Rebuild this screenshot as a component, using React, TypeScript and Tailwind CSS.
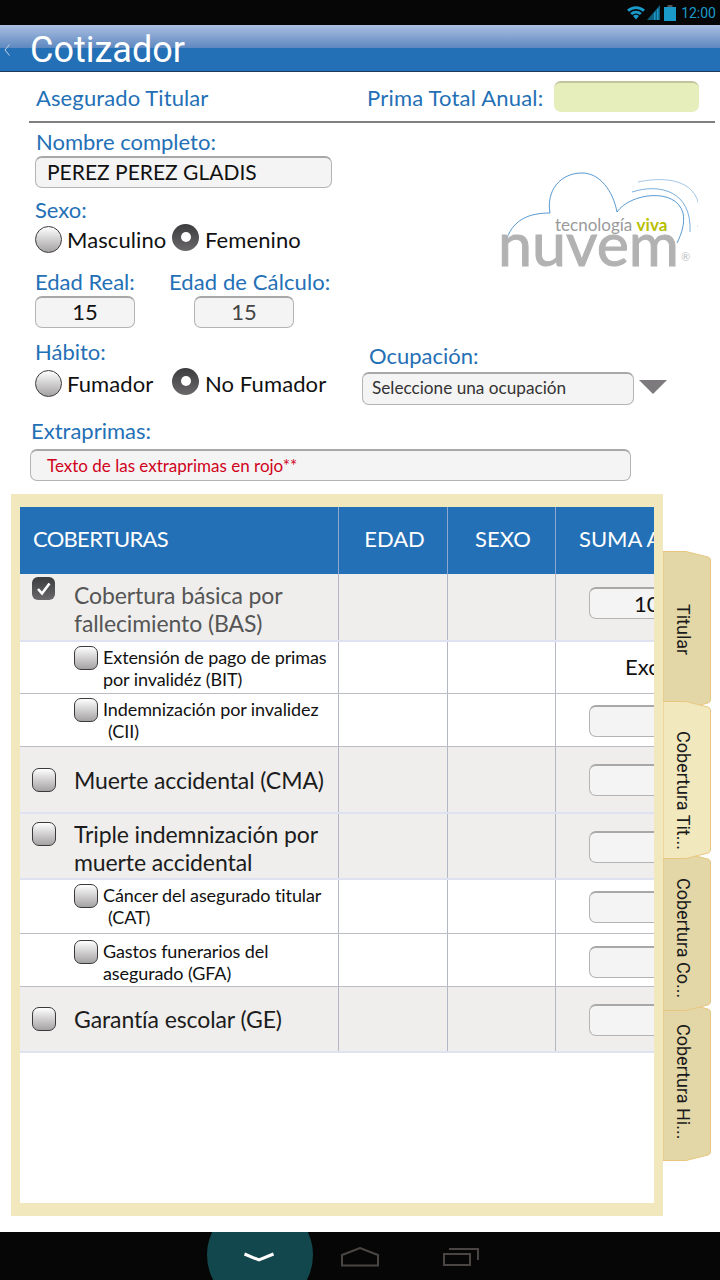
import React from "react";

const LABEL = "text-[22px] leading-[24px] text-[#2470b6] whitespace-nowrap";
const FIELD = "rounded-[7px] border border-[#b4b4b4] border-t-2 border-t-[#a8a8a8] bg-[#f4f4f4]";

const Radio = ({ checked }: { checked?: boolean }) =>
  checked ? (
    <span className="block w-[27px] h-[27px] rounded-full bg-gradient-to-b from-[#3c3c3e] to-[#6a686a] flex items-center justify-center shrink-0">
      <span className="block w-[10px] h-[10px] rounded-full bg-white"></span>
    </span>
  ) : (
    <span className="block w-[27px] h-[27px] rounded-full border border-[#3a3a3a] bg-gradient-to-b from-[#ffffff] to-[#a5a2a4] shrink-0"></span>
  );

const Check = ({ checked }: { checked?: boolean }) =>
  checked ? (
    <span className="block w-[23px] h-[23px] rounded-[6px] bg-gradient-to-b from-[#3c3c3e] to-[#6a686a] shrink-0">
      <svg viewBox="0 0 23 23" className="w-[23px] h-[23px]">
        <path d="M6 12 L10 16.5 L17.5 6.5" fill="none" stroke="#fff" strokeWidth="2.6" />
      </svg>
    </span>
  ) : (
    <span className="block w-[24px] h-[24px] rounded-[7px] border border-[#3a3a3a] bg-gradient-to-b from-[#ffffff] to-[#a5a2a4] shrink-0"></span>
  );

const Logo = () => (
  <svg viewBox="498 168 200 100" className="w-[200px] h-[100px]">
    <g fill="none" stroke="#2f7fc4" strokeWidth="0.8">
      <path d="M507 237 C514 218 530 212 550 212 C546 190 560 172 582 172 C600 172 613 190 617 211 C630 192 676 186 683 212 C685 222 682 232 677 242" />
      <path d="M632 191 C660 182 692 190 690 231" strokeOpacity="0.8" />
      <path d="M638 181 C670 174 708 180 698 226" strokeOpacity="0.55" />
    </g>
    <text x="555" y="230" fontSize="17" fill="#9a9a9a" fontFamily="Lato, sans-serif">
      tecnología <tspan fill="#b6c000" fontWeight="700">viva</tspan>
    </text>
    <text x="498" y="265" fontSize="60" fill="#b2b2b2" stroke="#b2b2b2" strokeWidth="1" fontFamily="Lato, sans-serif" textLength="181" lengthAdjust="spacingAndGlyphs">
      nuvem
    </text>
    <text x="681" y="260" fontSize="11" fill="#bdbdbd" fontFamily="Lato, sans-serif">®</text>
  </svg>
);

const Tab = ({ label, active, cls }: { label: string; active?: boolean; cls: string }) => (
  <div className={`relative w-[48px] h-[158px] flex items-center justify-center ${cls}`}>
    <svg viewBox="0 0 48 158" className="absolute inset-0 w-[48px] h-[158px]">
      <path
        d="M0 0.5 H23 L45 6 Q47.5 7 47.5 9 V149 Q47.5 151 45 152 L23 157.5 H0 Z"
        fill={active ? "#f2e8be" : "#e3d7a7"}
        stroke="#e8c67f"
      />
    </svg>
    <span className="relative [writing-mode:vertical-rl] font-['Roboto',sans-serif] text-[18px] leading-[20px] text-[#1a1a1a] whitespace-nowrap pr-[8px]">
      {label}
    </span>
  </div>
);

type Row = {
  h: string;
  text: string[];
  main?: boolean;
  checked?: boolean;
  muted?: boolean;
  indent?: boolean;
  inputTop?: string;
  value?: string;
  exc?: boolean;
  subTop?: string;
};

const ROWS: Row[] = [
  { h: "h-[68px]", text: ["Cobertura básica por", "fallecimiento (BAS)"], main: true, checked: true, muted: true, inputTop: "pt-[13px]", value: "100,000" },
  { h: "h-[52px]", text: ["Extensión de pago de primas", "por invalidéz (BIT)"], exc: true },
  { h: "h-[53px]", text: ["Indemnización por invalidez", "(CII)"], indent: true, inputTop: "pt-[11px]" },
  { h: "h-[67px]", text: ["Muerte accidental (CMA)"], main: true, inputTop: "pt-[17px]" },
  { h: "h-[66px]", text: ["Triple indemnización por", "muerte accidental"], main: true, inputTop: "pt-[17px]" },
  { h: "h-[54px]", text: ["Cáncer del asegurado titular", "(CAT)"], indent: true, inputTop: "pt-[11px]" },
  { h: "h-[53px]", text: ["Gastos funerarios del", "asegurado (GFA)"], inputTop: "pt-[12px]", subTop: "pt-[6px]" },
  { h: "h-[66px]", text: ["Garantía escolar (GE)"], main: true, inputTop: "pt-[17px]" },
];

const CobRow = ({ row }: { row: Row }) => {
  const rowCls = row.main
    ? "bg-[#efeeec] border-b-2 border-b-[#dfe2f0]"
    : "bg-white border-b border-b-[#bcbcc4]";
  return (
    <div className={`flex ${row.h} ${rowCls}`}>
      <div className="w-[319px] shrink-0 border-r border-[#b4b8c4] flex">
        {row.main ? (
          <div className={`flex w-full ${row.text.length === 1 ? "items-center" : ""}`}>
            <div className={row.text.length === 1 ? "pl-[12px]" : row.checked ? "pl-[12px] pt-[3px]" : "pl-[12px] pt-[8px]"}>
              <Check checked={row.checked} />
            </div>
            <div className={`${row.checked ? "pl-[19px]" : "pl-[18px]"} text-[23px] leading-[28px] tracking-[-0.1px] whitespace-nowrap ${row.muted ? "text-[#555555] pt-[7px]" : "text-[#1c1c1c]"} ${!row.muted && row.text.length > 1 ? "pt-[6px]" : ""}`}>
              {row.text.map((t) => (
                <div key={t}>{t}</div>
              ))}
            </div>
          </div>
        ) : (
          <div className={`flex pl-[54px] ${row.subTop ?? "pt-[4px]"}`}>
            <Check />
            <div className="pl-[5px] text-[18px] leading-[22px] tracking-[-0.1px] text-[#111] whitespace-nowrap">
              {row.text.map((t, i) => (
                <div key={t} className={row.indent && i === 1 ? "pl-[5px]" : ""}>
                  {t}
                </div>
              ))}
            </div>
          </div>
        )}
      </div>
      <div className="w-[109px] shrink-0 border-r border-[#b4b8c4]"></div>
      <div className="w-[108px] shrink-0 border-r border-[#b4b8c4]"></div>
      <div className={`w-[210px] shrink-0 pl-[33px] ${row.inputTop ?? ""}`}>
        {row.exc ? (
          <div className="pl-[36px] pt-[11px] text-[22px] leading-[28px] text-[#111]">Excluido</div>
        ) : (
          <div className={`h-[32px] w-[150px] ${FIELD} pl-[44px] text-[22px] leading-[29px] text-[#111]`}>{row.value ?? ""}</div>
        )}
      </div>
    </div>
  );
};

export default function App() {
  return (
    <div className="w-[720px] h-[1280px] overflow-hidden bg-white flex flex-col font-['Lato',sans-serif]">
      {/* status bar */}
      <div className="h-[25px] bg-[#060606] flex items-center justify-end pr-[4px] shrink-0">
        <svg viewBox="0 0 18 15" className="w-[18px] h-[15px]">
          <path d="M0 4.8 A13 13 0 0 1 18 4.8 L16 6.8 A10 10 0 0 0 2 6.8 Z M3.2 8 A8.5 8.5 0 0 1 14.8 8 L12.8 10 A5.5 5.5 0 0 0 5.2 10 Z M6 11 A4 4 0 0 1 12 11 L9 14.6 Z" fill="#1a9ac9" />
        </svg>
        <svg viewBox="0 0 13 15" className="w-[13px] h-[15px] ml-[2px]">
          <path d="M0 15 L13 0 V15 Z" fill="#0f5f7f" />
          <path d="M7 15 V8 L8.5 6 V15 Z M10 15 V4.5 L11.5 3 V15 Z" fill="#1a9ac9" />
        </svg>
        <svg viewBox="0 0 12 16" className="w-[12px] h-[16px] ml-[4px]">
          <path d="M3.5 0 H8.5 V2 H3.5 Z" fill="#555" />
          <path d="M0 2 H12 V16 H0 Z" fill="#1a9ac9" />
        </svg>
        <span className="font-['Roboto',sans-serif] text-[14px] leading-none text-[#1a9ac9] ml-[5px]">12:00</span>
      </div>

      {/* title bar */}
      <div className="h-[47px] shrink-0 bg-[linear-gradient(to_bottom,#abbfe2_0%,#5e88bf_50%,#2470b6_51%,#2470b6_100%)] border-b border-b-[#1d3b5c] flex items-center pt-[4px]">
        <svg viewBox="0 0 6 12" className="w-[6px] h-[12px] ml-[4px]">
          <path d="M5.5 0.5 L1 6 L5.5 11.5" fill="none" stroke="#c4d2ea" strokeWidth="1" />
        </svg>
        <span className="ml-[20px] font-['Roboto',sans-serif] text-[36px] leading-none text-white">Cotizador</span>
      </div>

      {/* top row */}
      <div className="h-[49px] shrink-0 flex items-center pl-[36px]">
        <span className={`${LABEL} w-[331px] pt-[3px] tracking-[0.1px]`}>Asegurado Titular</span>
        <span className={`${LABEL} w-[187px] pt-[3px] tracking-[0.2px]`}>Prima Total Anual:</span>
        <div className="w-[145px] h-[31px] rounded-[7px] bg-[#e6eebc] border-t-2 border-t-[#c4c49c]"></div>
      </div>
      <div className="h-[2px] ml-[29px] mr-[5px] bg-[#808080] shrink-0"></div>

      {/* datos */}
      <div className="flex shrink-0 pl-[35px]">
        <div className="w-[298px] flex flex-col">
          <div className={`${LABEL} pl-[1px] pt-[7px]`}>Nombre completo:</div>
          <div className={`${FIELD} mt-[2px] h-[32px] w-[297px] pl-[11px] text-[21px] leading-[28px] text-[#111]`}>PEREZ PEREZ GLADIS</div>
          <div className={`${LABEL} mt-[10px]`}>Sexo:</div>
          <div className="flex items-center mt-[2px] h-[30px] text-[22px] tracking-[0.1px] text-[#111] whitespace-nowrap">
            <Radio />
            <span className="pl-[5px] w-[110px]">Masculino</span>
            <div className="-mt-[4px]"><Radio checked /></div>
            <span className="pl-[6px]">Femenino</span>
          </div>
          <div className="flex mt-[16px]">
            <div className="w-[134px]">
              <div className={LABEL}>Edad Real:</div>
              <div className={`${FIELD} mt-[2px] h-[32px] w-[100px] text-center text-[22px] leading-[28px] text-[#111]`}>15</div>
            </div>
            <div>
              <div className={`${LABEL} tracking-[0.1px]`}>Edad de Cálculo:</div>
              <div className={`${FIELD} mt-[2px] ml-[25px] h-[32px] w-[100px] text-center text-[22px] leading-[28px] text-[#444]`}>15</div>
            </div>
          </div>
        </div>
        <div className="ml-[165px] mt-[46px]">
          <Logo />
        </div>
      </div>

      {/* habito / ocupacion */}
      <div className="flex shrink-0 pl-[35px] mt-[12px]">
        <div className="w-[327px]">
          <div className={LABEL}>Hábito:</div>
          <div className="flex items-center mt-[4px] h-[30px] text-[22px] tracking-[0.1px] text-[#111] whitespace-nowrap">
            <Radio />
            <span className="pl-[5px] w-[110px]">Fumador</span>
            <div className="-mt-[4px]"><Radio checked /></div>
            <span className="pl-[6px]">No Fumador</span>
          </div>
        </div>
        <div className="mt-[4px]">
          <div className={`${LABEL} pl-[7px]`}>Ocupación:</div>
          <div className="flex items-center mt-[4px]">
            <div className={`${FIELD} h-[33px] w-[272px] pl-[9px] text-[17.2px] leading-[28px] text-[#333]`}>Seleccione una ocupación</div>
            <svg viewBox="0 0 28 14" className="w-[28px] h-[14px] ml-[5px] -mt-[4px]">
              <path d="M0 0 H28 L14 14 Z" fill="#7c7a7c" />
            </svg>
          </div>
        </div>
      </div>

      {/* extraprimas */}
      <div className="shrink-0 pl-[30px] mt-[14px]">
        <div className={`${LABEL} pl-[1px]`}>Extraprimas:</div>
        <div className={`${FIELD} mt-[6px] h-[32px] w-[601px] pl-[16px] text-[17px] leading-[30px] text-[#d0021b]`}>Texto de las extraprimas en rojo**</div>
      </div>

      {/* coberturas + tabs */}
      <div className="flex shrink-0 mt-[13px] pl-[11px]">
        <div className="w-[652px] h-[722px] bg-[#f2e8be] p-[9px] pt-[13px] pb-[13px]">
          <div className="h-full bg-white overflow-hidden">
            <div className="w-[746px]">
              <div className="flex h-[67px] bg-[#2470b6] text-white text-[22px] leading-[64px] whitespace-nowrap">
                <div className="w-[319px] shrink-0 pl-[13px] border-r border-[#8fa8cf] tracking-[-0.7px]">COBERTURAS</div>
                <div className="w-[109px] shrink-0 text-center pl-[3px] border-r border-[#8fa8cf]">EDAD</div>
                <div className="w-[108px] shrink-0 text-center pl-[3px] border-r border-[#8fa8cf]">SEXO</div>
                <div className="w-[210px] shrink-0 pl-[23px]">SUMA ASEGURADA</div>
              </div>
              {ROWS.map((row) => (
                <CobRow key={row.text[0]} row={row} />
              ))}
            </div>
          </div>
        </div>
        <div className="flex flex-col pt-[57px]">
          <Tab label="Titular" cls="z-10" />
          <Tab label="Cobertura Tit..." active cls="z-40 -mt-[8px] pt-[20px]" />
          <Tab label="Cobertura Co..." cls="z-30 -mt-[6px] pt-[12px]" />
          <Tab label="Cobertura Hi..." cls="z-20 -mt-[8px]" />
        </div>
      </div>

      {/* nav bar */}
      <div className="relative mt-auto h-[48px] shrink-0 bg-[#060606] overflow-hidden">
        <div className="absolute left-[207px] -top-[30px] w-[106px] h-[106px] rounded-full bg-[#12474d]"></div>
        <svg viewBox="0 0 32 12" className="absolute left-[243px] top-[20px] w-[32px] h-[12px]">
          <path d="M1.5 2 L16 8 L30.5 2" fill="none" stroke="#fff" strokeWidth="3" />
        </svg>
        <svg viewBox="0 0 38 20" className="absolute left-[341px] top-[15px] w-[38px] h-[20px]">
          <path d="M1 18.5 V8 L19 1 L37 8 V18.5 Z" fill="none" stroke="#4a4543" strokeWidth="2" />
        </svg>
        <svg viewBox="0 0 36 18" className="absolute left-[443px] top-[16px] w-[36px] h-[18px]">
          <path d="M1 6 H27 V17 H1 Z M6 1 H35 V12" fill="none" stroke="#4a4543" strokeWidth="2" />
        </svg>
      </div>
    </div>
  );
}
